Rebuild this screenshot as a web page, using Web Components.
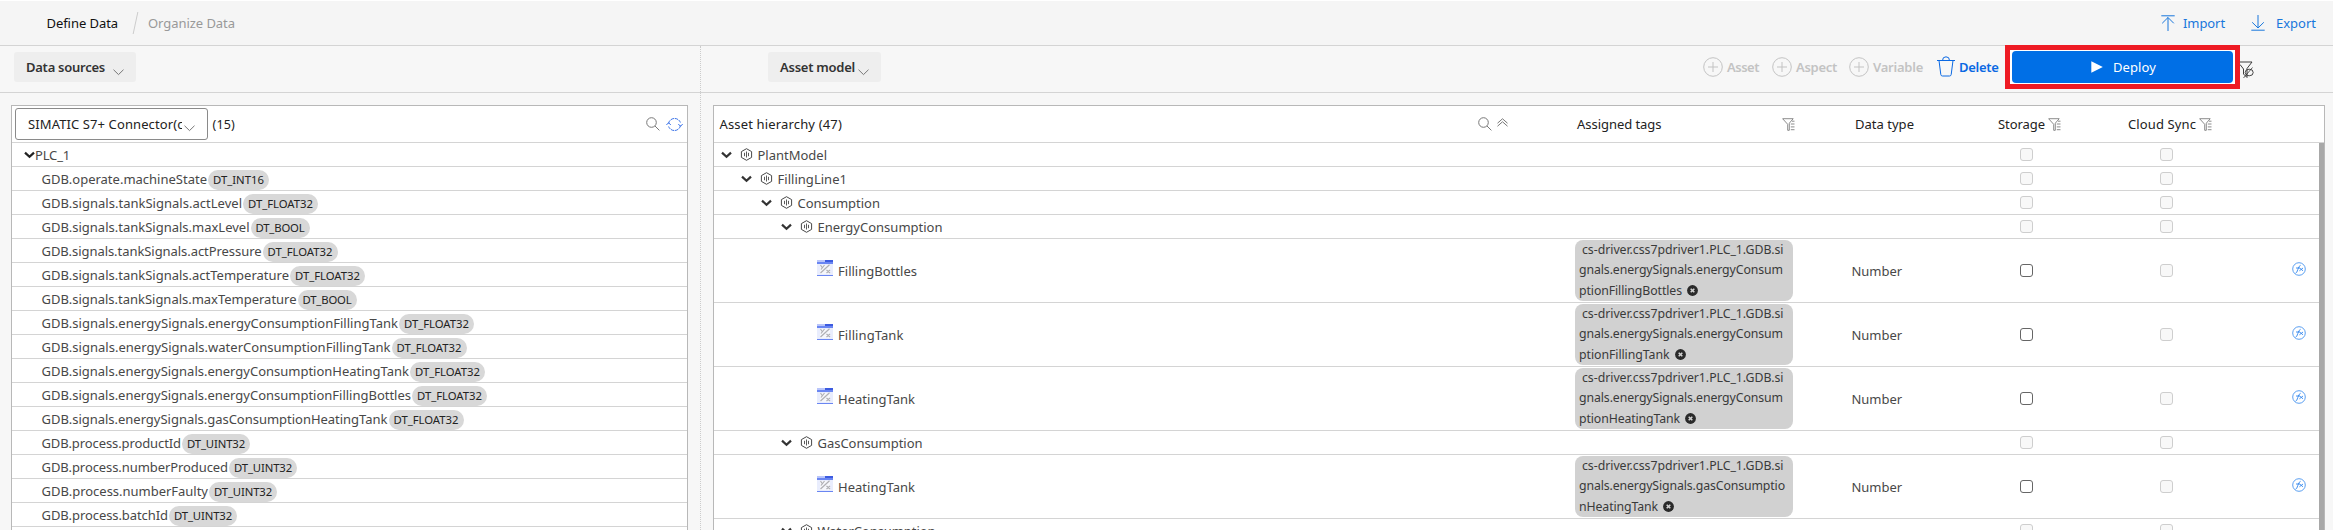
<!DOCTYPE html>
<html lang="en"><head><meta charset="utf-8"><title>Define Data</title>
<style>
html,body{margin:0;height:530px;overflow:hidden;background:#f7f7f7;font-family:"Noto Sans","Liberation Sans",sans-serif}
</style></head><body>
<data-mapper></data-mapper>
<script>
const svg=(w,h,body,vb)=>`<svg width="${w}" height="${h}" viewBox="${vb||`0 0 ${w} ${h}`}" fill="none" stroke="currentColor">${body}</svg>`;
const ICONS={
 down:svg(11,7,'<path d="M.5 .7 5.5 5.6 10.500 .7"/>'),
 fold:svg(11,8,'<path d="M1 1.600 5.500 5.800 10 1.600" stroke-width="2.200"/>'),
 search:svg(14,14,'<circle cx="5.500" cy="5.500" r="4.800"/><path d="M9 9 13.400 13.400"/>'),
 refresh:svg(17,15,'<path d="M2.500 6.500A6.200 6.200 0 0 1 14.400 5.500M14.500 8.500A6.200 6.200 0 0 1 2.600 9.500" stroke-dasharray="3.500 .8"/><path d="M.4 8 2.600 5.700 4.800 8M12.300 7 14.500 9.300 16.700 7"/>'),
 up2:svg(11,9,'<path d="M.5 5.200 5.500 .8 10.500 5.200M.5 8.200 5.500 3.800 10.500 8.200"/>'),
 filter:svg(13,13,'<path d="M.5 .7H11.200L7.300 5.200V12.300H5.700V6.300L.8 .9M8.800 6H12.500M8.800 8.900H12.500M8.800 11.700H12.500M10 3.200H12.500" stroke-width=".85"/>'),
 nofilter:svg(14,18,'<path d="M0 1H12L7 7.500V16.500L3.500 13V8L0 3.500" stroke-width=".95"/><ellipse cx="9.200" cy="11.500" rx="4" ry="3.300" stroke-width=".9"/><path d="M3.500 17 12.500 6.500" stroke-width=".8"/>'),
 plus:svg(20,20,'<circle cx="10" cy="10" r="9.300"/><path d="M10 5V15M5 10H15"/>'),
 trash:svg(18,21,'<path d="M0 4.500H18M2 4.500 3.800 18.500Q4 20 5.500 20H12.500Q14 20 14.200 18.500L16 4.500M5.500 4.500Q5.500 .8 9 .8T12.500 4.500"/>'),
 play:svg(12,12,'<path d="M.3 .3 11.800 6 .3 11.700Z" fill="currentColor" stroke="none"/>'),
 imp:svg(14,16,'<path d="M.3 .8H13.700M7 2.500V16M1.200 8.300 7 2.500 12.800 8.300"/>'),
 exp:svg(14,16,'<path d="M.3 15.200H13.700M7 0V13M1.200 7.300 7 13 12.800 7.300"/>'),
 asset:svg(13,13,'<path d="M6.500 .7 11.600 3.600V9.400L6.500 12.300 1.400 9.400V3.600Z"/><path d="M4.500 4.800V8.200M6.500 3.500V9.500M8.500 4.800V8.200" stroke-width=".9"/>'),
 variable:svg(16,16,'<path d="M0 0H8V2H0Z" fill="#b9c5fa" stroke="none"/><path d="M0 3V16H16V3" fill="#e9edfd" stroke="none"/><path d="M3 5H13V14H3Z" fill="#f6f7fb" stroke="none"/><path d="M8 0H16V2H8Z" fill="#3c5be0" stroke="none"/><path d="M0 2H16V4H0ZM0 15H16V16H0Z" fill="#6a86f2" stroke="none"/><path d="M3.500 13 12.500 4.700M3.500 5 5.500 8M7.500 5 4 9.500M9.500 10 13 13M13 10 9.500 13" stroke="#b0b0b4" stroke-width="1.200"/>'),
 remove:svg(11,11,'<circle cx="5.500" cy="5.500" r="5.400" fill="#2a2a2a" stroke="none"/><path d="M3.700 3.700 7.300 7.300M7.300 3.700 3.700 7.300" stroke="#d1d1d1" stroke-width="1.600"/>'),
 fx:svg(14,14,'<circle cx="7" cy="7" r="6.300" stroke-width=".8"/><path d="M3.500 11.200Q5 11 5.800 7.500T8.600 3.300M4 6H8M7.600 6 11 8.800M11 6 7.400 8.800" stroke-width=".9"/>')
};
class UiIcon extends HTMLElement{connectedCallback(){if(this.shadowRoot)return;this.attachShadow({mode:'open'}).innerHTML=`<style>:host{display:inline-block;flex:none;line-height:0}svg{display:block}</style>${ICONS[this.getAttribute('name')]}`}}
customElements.define('ui-icon',UiIcon);
/* A label that tracks its letters to fill a given width. */
class UiLabel extends HTMLElement{connectedCallback(){if(this.shadowRoot)return;this.attachShadow({mode:'open'}).innerHTML='<style>:host{display:inline-block;flex:none;white-space:pre}</style><span><slot></slot></span>';
 const w=+this.getAttribute('w');if(w){const n=this.shadowRoot.querySelector('span').getBoundingClientRect().width;this.style.letterSpacing=((w-n)/this.textContent.length).toFixed(3)+'px';this.style.width=w+'px'}}}
customElements.define('ui-label',UiLabel);
class UiCheck extends HTMLElement{connectedCallback(){if(this.shadowRoot)return;this.attachShadow({mode:'open'}).innerHTML='<style>:host{display:block;box-sizing:border-box;width:13px;height:13px;border:1px solid #666;border-radius:3px;background:#fff}:host([off]){border-color:#cecece;background:#f8f8f8}</style>'}}
customElements.define('ui-check',UiCheck);
class SourceRow extends HTMLElement{connectedCallback(){if(this.shadowRoot)return;const [t,w,p,pw]=this.getAttribute('row').split('|');
 this.attachShadow({mode:'open'}).innerHTML=`<style>:host{display:flex;align-items:center;height:23px;border-bottom:1px solid #d4d4d4;padding-left:29.500px;font-size:13px;color:#484848}b{font-weight:400;font-size:11.300px;line-height:20px;color:#222;background:#d8d8d8;border-radius:10px;padding:0 5px;height:20px;margin:2px 0 0 1px}</style><ui-label w="${w}">${t}</ui-label><b><ui-label w="${pw}">${p}</ui-label></b>`}}
customElements.define('source-row',SourceRow);
class AssetRow extends HTMLElement{connectedCallback(){if(this.shadowRoot)return;const [lv,t,w]=this.getAttribute('row').split('|');const tag=this.getAttribute('tag');
 this.attachShadow({mode:'open'}).innerHTML=`<style>
 :host{display:grid;grid-template-columns:861px 276.500px 168.500px 140px 132px 1fr;align-items:center;height:${tag?63:23}px;border-bottom:1px solid #d4d4d4;font-size:13px;color:#484848}
 .n{display:flex;align-items:center;padding-left:${tag?103:7+20*lv}px}
 .n ui-icon[name=fold]{color:#333;margin-right:7.500px}.n ui-icon[name=asset]{margin-right:5px}.n ui-icon[name=variable]{margin:-5px 5px 0 0}
 .tag{box-sizing:border-box;width:218px;height:61px;background:#d1d1d1;border-radius:8px;padding:0 4px;font-size:12.300px;line-height:20.300px;color:#3a3a3a}
 .tag div{display:flex;align-items:center;height:20.300px}.tag div:first-child{padding-left:3px}.tag ui-icon{margin-left:5px}
 ui-icon[name=fx]{color:#3187ee}</style>
 <div class="n">${tag?'<ui-icon name="variable"></ui-icon>':'<ui-icon name="fold"></ui-icon><ui-icon name="asset"></ui-icon>'}<ui-label w="${w}">${t}</ui-label></div>
 <div>${tag?`<div class="tag">${tag.split(';').map((l,i)=>{const [s,lw]=l.split('|');return `<div><ui-label w="${lw}">${s}</ui-label>${i==2?'<ui-icon name="remove"></ui-icon>':''}</div>`}).join('')}</div>`:''}</div>
 <div>${tag?'<ui-label w="50.500">Number</ui-label>':''}</div>
 <ui-check ${tag?'':'off'}></ui-check><ui-check off></ui-check><div>${tag?'<ui-icon name="fx"></ui-icon>':''}</div>`}}
customElements.define('asset-row',AssetRow);
class DropButton extends HTMLElement{connectedCallback(){if(this.shadowRoot)return;this.attachShadow({mode:'open'}).innerHTML=`<style>:host{display:flex;box-sizing:border-box;align-items:center;height:30px;border-radius:3px;background:#eee;padding:0 12px;font-size:13px;font-weight:600;color:#333}ui-icon{margin:10px 0 0 auto;color:#777}</style><slot></slot><ui-icon name="down"></ui-icon>`}}
customElements.define('drop-button',DropButton);
const SRC=['GDB.operate.machineState|165.500|DT_INT16|51','GDB.signals.tankSignals.actLevel|200.500|DT_FLOAT32|65','GDB.signals.tankSignals.maxLevel|208|DT_BOOL|49','GDB.signals.tankSignals.actPressure|220|DT_FLOAT32|65','GDB.signals.tankSignals.actTemperature|247.500|DT_FLOAT32|65','GDB.signals.tankSignals.maxTemperature|255|DT_BOOL|49','GDB.signals.energySignals.energyConsumptionFillingTank|356.500|DT_FLOAT32|65','GDB.signals.energySignals.waterConsumptionFillingTank|349|DT_FLOAT32|65','GDB.signals.energySignals.energyConsumptionHeatingTank|367.500|DT_FLOAT32|65','GDB.signals.energySignals.energyConsumptionFillingBottles|369.500|DT_FLOAT32|65','GDB.signals.energySignals.gasConsumptionHeatingTank|346|DT_FLOAT32|65','GDB.process.productId|139.500|DT_UINT32|58','GDB.process.numberProduced|186.500|DT_UINT32|58','GDB.process.numberFaulty|166.500|DT_UINT32|58','GDB.process.batchId|126.500|DT_UINT32|58'];
const L1='cs-driver.css7pdriver1.PLC_1.GDB.si|201.500',L2='gnals.energySignals.energyConsum|204';
const ASSETS=[['0|PlantModel|69.500'],['1|FillingLine1|69.500'],['2|Consumption|82.500'],['3|EnergyConsumption|125'],['4|FillingBottles|79',`${L1};${L2};ptionFillingBottles|103`],['4|FillingTank|65.500',`${L1};${L2};ptionFillingTank|90.500`],['4|HeatingTank|77',`${L1};${L2};ptionHeatingTank|101`],['3|GasConsumption|105'],['4|HeatingTank|77',`${L1};gnals.energySignals.gasConsumptio|206;nHeatingTank|79`],['3|WaterConsumption|118']];
class DataMapper extends HTMLElement{connectedCallback(){if(this.shadowRoot)return;this.attachShadow({mode:'open'}).innerHTML=`<style>
:host{display:flex;flex-direction:column;height:530px;font-size:13px;color:#222;background:#f7f7f7}
header{display:flex;align-items:center;box-sizing:border-box;height:46px;border-top:1px solid #fff;border-bottom:1px solid #d4d4d4;background:#f5f5f5;padding:0 17px 0 46.500px}
.slash{width:1px;height:22px;background:#ccc;transform:skewX(-12deg);margin:0 12.500px 0 16.500px}
.act{color:#1877dc;display:flex;align-items:center}.act ui-label{margin-left:8px}.grow{flex:1}
.bar{display:flex;box-sizing:border-box;height:47px;border-bottom:1px solid #d4d4d4}
.bl,.ml{flex:none;box-sizing:border-box;width:701px;border-right:1px dotted #ccc}
.bl{padding:6px 0 0 14px}.br{flex:1;display:flex;align-items:flex-start;padding:6px 79px 0 67px}
.tools{display:flex;align-items:center;height:29px;font-weight:600;color:#c3c3c3;font-size:13px}
.tools ui-label{margin:0 13px 0 4px}
.tools .del{color:#0b69e3;display:flex;align-items:center}
.red{display:flex;box-sizing:border-box;width:235px;height:44px;border:5px solid #ee1b24;background:#fff;padding:1px 2px 1px 2px;margin-top:-7px}
.deploy{flex:1;display:flex;align-items:center;background:#006fe6;color:#fff;border-radius:4px;padding-left:79px}.deploy ui-label{margin-left:10px}
.main{display:flex;flex:1;min-height:0}.ml{padding:12px 12px 0 11px}.mr{flex:1;padding:12px 8px 0 12px;min-width:0}
.panel{height:450px;border:1px solid #b8b8b8;border-bottom:0;background:#fff;overflow:hidden;box-sizing:border-box}
.h{display:flex;align-items:center;height:36px;border-bottom:1px solid #d4d4d4}
.sel{display:flex;align-items:center;box-sizing:border-box;width:193px;height:32px;border:1px solid #8a8a8a;border-radius:3px;margin:0 4.500px 0 3px;padding:0 12px}
.sel span{width:154px;overflow:hidden;flex:none}.sel ui-icon{margin:8px 0 0 2px;color:#777}
.plc{display:flex;align-items:center;height:23px;border-bottom:1px solid #d4d4d4;padding-left:11.500px;color:#484848}.plc ui-icon{color:#222;margin-right:.500px}
.g{display:grid;grid-template-columns:764px 99px 205px 73px 143px 130px 1fr}.g>div{display:flex;align-items:center}.g ui-icon,.h>ui-icon{color:#777}
.body{display:flex}.rows{flex:1}.sb{width:5px;background:#a8a8a8}
</style>
<header><ui-label w="71.500" style="color:#111">Define Data</ui-label><i class="slash"></i><ui-label w="87" style="color:#999">Organize Data</ui-label><div class="grow"></div>
<div class="act" style="margin-right:26px"><ui-icon name="imp"></ui-icon><ui-label w="42">Import</ui-label></div><div class="act"><ui-icon name="exp"></ui-icon><ui-label w="40" style="margin-left:11px">Export</ui-label></div></header>
<div class="bar"><div class="bl"><drop-button style="width:122px"><ui-label w="79">Data sources</ui-label></drop-button></div>
<div class="br"><drop-button style="width:113px"><ui-label w="75">Asset model</ui-label></drop-button><div class="grow"></div>
<div class="tools"><ui-icon name="plus"></ui-icon><ui-label w="32">Asset</ui-label><ui-icon name="plus"></ui-icon><ui-label w="41" style="margin-right:12px">Aspect</ui-label><ui-icon name="plus"></ui-icon><ui-label w="50" style="margin-right:14px">Variable</ui-label><div class="del"><ui-icon name="trash"></ui-icon><ui-label w="39.500" style="margin:0 6.500px 0 4px">Delete</ui-label></div></div>
<div class="red"><div class="deploy"><ui-icon name="play"></ui-icon><ui-label w="43">Deploy</ui-label></div></div><ui-icon name="nofilter" style="margin:9px 0 0 0;color:#333"></ui-icon></div></div>
<div class="main"><div class="ml"><div class="panel"><div class="h"><div class="sel"><span><ui-label w="155.500">SIMATIC S7+ Connector(c</ui-label></span><ui-icon name="down"></ui-icon></div><ui-label w="22.500" style="font-size:12.500px">(15)</ui-label><div class="grow"></div><ui-icon name="search" style="margin-right:6px"></ui-icon><ui-icon name="refresh" style="color:#3b73e8;margin-right:4px"></ui-icon></div>
<div class="plc"><ui-icon name="fold"></ui-icon><ui-label w="35">PLC_1</ui-label></div>${SRC.map(r=>`<source-row row="${r}"></source-row>`).join('')}</div></div>
<div class="mr"><div class="panel"><div class="h g"><div style="padding-left:5.500px"><ui-label w="122.500">Asset hierarchy (47)</ui-label></div><div><ui-icon name="search" style="margin-right:5px"></ui-icon><ui-icon name="up2" style="margin-top:-4px"></ui-icon></div><div><ui-label w="84.500">Assigned tags</ui-label></div><div><ui-icon name="filter"></ui-icon></div><div><ui-label w="59">Data type</ui-label></div><div><ui-label w="47">Storage</ui-label><ui-icon name="filter" style="margin-left:3px"></ui-icon></div><div><ui-label w="68">Cloud Sync</ui-label><ui-icon name="filter" style="margin-left:3px"></ui-icon></div></div>
<div class="body"><div class="rows">${ASSETS.map(([r,t])=>`<asset-row row="${r}"${t?` tag="${t}"`:''}></asset-row>`).join('')}</div><div class="sb"></div></div></div></div></div>`;
}}
customElements.define('data-mapper',DataMapper);
</script></body></html>
